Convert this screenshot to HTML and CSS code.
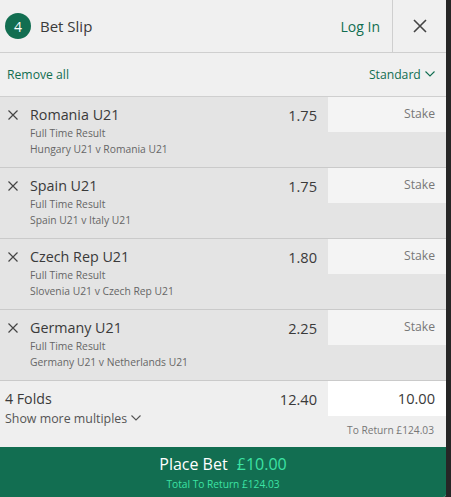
FILE: index.html
```html
<!DOCTYPE html>
<html lang="en">
<head>
    <meta charset="UTF-8">
    <title>Bet Slip</title>
    <link rel="stylesheet" href="styles.css">
</head>
<body>
	<div class="slip">
		<div class="top">
			<div class="badge">4</div>
			<div class="title">Bet Slip</div>
			<a class="login" href="#">Log In</a>
			<div class="close">
				<svg width="14" height="14" viewBox="0 0 14 14"><path d="M1 1L13 13M13 1L1 13" stroke="#444" stroke-width="1.6" fill="none"/></svg>
			</div>
		</div>
		<div class="tools">
			<a href="#">Remove all</a>
			<a href="#">Standard <svg class="chev" width="10" height="6" viewBox="0 0 10 6"><path d="M0.5 0.5L5 5L9.5 0.5" stroke="#126e51" stroke-width="1.1" fill="none"/></svg></a>
		</div>

		<div class="sel">
			<div class="pick">
				<svg class="x" width="10" height="10" viewBox="0 0 10 10"><path d="M0.5 0.5L9.5 9.5M9.5 0.5L0.5 9.5" stroke="#444" stroke-width="1.2" fill="none"/></svg>
				<div class="info">
					<div class="name">Romania U21</div>
					<div class="sub">Full Time Result</div>
					<div class="sub">Hungary U21 v Romania U21</div>
				</div>
				<div class="odds">1.75</div>
			</div>
			<div class="stake">Stake</div>
		</div>
		<div class="sel">
			<div class="pick">
				<svg class="x" width="10" height="10" viewBox="0 0 10 10"><path d="M0.5 0.5L9.5 9.5M9.5 0.5L0.5 9.5" stroke="#444" stroke-width="1.2" fill="none"/></svg>
				<div class="info">
					<div class="name">Spain U21</div>
					<div class="sub">Full Time Result</div>
					<div class="sub">Spain U21 v Italy U21</div>
				</div>
				<div class="odds">1.75</div>
			</div>
			<div class="stake">Stake</div>
		</div>
		<div class="sel">
			<div class="pick">
				<svg class="x" width="10" height="10" viewBox="0 0 10 10"><path d="M0.5 0.5L9.5 9.5M9.5 0.5L0.5 9.5" stroke="#444" stroke-width="1.2" fill="none"/></svg>
				<div class="info">
					<div class="name">Czech Rep U21</div>
					<div class="sub">Full Time Result</div>
					<div class="sub">Slovenia U21 v Czech Rep U21</div>
				</div>
				<div class="odds">1.80</div>
			</div>
			<div class="stake">Stake</div>
		</div>
		<div class="sel">
			<div class="pick">
				<svg class="x" width="10" height="10" viewBox="0 0 10 10"><path d="M0.5 0.5L9.5 9.5M9.5 0.5L0.5 9.5" stroke="#444" stroke-width="1.2" fill="none"/></svg>
				<div class="info">
					<div class="name">Germany U21</div>
					<div class="sub">Full Time Result</div>
					<div class="sub">Germany U21 v Netherlands U21</div>
				</div>
				<div class="odds">2.25</div>
			</div>
			<div class="stake">Stake</div>
		</div>

		<div class="folds">
			<div class="fold-left">
				<div class="fold-name">4 Folds</div>
				<div class="more">Show more multiples <svg class="chev" width="10" height="6" viewBox="0 0 10 6"><path d="M0.5 0.5L5 5L9.5 0.5" stroke="#555" stroke-width="1.1" fill="none"/></svg></div>
			</div>
			<div class="fold-odds">12.40</div>
			<div class="fold-right">
				<div class="amount">10.00</div>
				<div class="ret">To Return £124.03</div>
			</div>
		</div>

		<div class="place">
			<div class="place-main">Place Bet <span class="place-amt">£10.00</span></div>
			<div class="place-ret">Total To Return £124.03</div>
		</div>
	</div>
</body>
</html>
```

FILE: styles.css
```css
*{
	padding: 0px;
	margin: 0px;
	box-sizing: border-box;
}
body{
	background-color: #262626;
	font-family: "Open Sans", "Noto Sans", sans-serif;
	color: #3a3a3a;
	height: 497px;
	overflow: hidden;
}
a{
	text-decoration: none;
	color: #126e51;
}
.slip{
	width: 446px;
	height: 497px;
	background-color: #f0f0f0;
	display: flex;
	flex-direction: column;
	border-bottom-right-radius: 3px;
	overflow: hidden;
}
.top{
	height: 53px;
	display: flex;
	align-items: center;
	border-bottom: 1px solid #cfcfcf;
}
.badge{
	width: 26px;
	height: 26px;
	margin-left: 5px;
	border-radius: 50%;
	background-color: #126e51;
	color: #fff;
	font-size: 14px;
	display: flex;
	align-items: center;
	justify-content: center;
}
.title{
	margin-left: 9px;
	font-size: 15px;
	flex: 1;
}
.login{
	font-size: 14px;
	margin-right: 12px;
}
.close{
	width: 54px;
	height: 52px;
	border-left: 1px solid #cfcfcf;
	display: flex;
	align-items: center;
	justify-content: center;
}
.tools{
	height: 44px;
	display: flex;
	justify-content: space-between;
	align-items: center;
	padding: 0 11px 0 7px;
	border-bottom: 1px solid #cfcfcf;
	font-size: 12.2px;
}
.chev{
	margin-left: 1px;
	vertical-align: 2px;
}
.sel{
	height: 71px;
	display: flex;
	background-color: #e4e4e4;
	border-bottom: 1px solid #cacaca;
}
.pick{
	flex: 1;
	display: flex;
	padding: 8px 11px 0 8px;
}
.x{
	margin-top: 5px;
	margin-right: 12px;
}
.info{
	flex: 1;
}
.name{
	font-size: 14.3px;
	line-height: 20px;
}
.sub{
	font-size: 10.3px;
	line-height: 16px;
	color: #666;
}
.odds{
	font-size: 14.6px;
	line-height: 20px;
}
.stake{
	width: 118px;
	height: 35px;
	background-color: #f4f4f4;
	color: #777;
	font-size: 12.2px;
	text-align: right;
	padding: 8px 11px 0 0;
}
.folds{
	height: 66px;
	display: flex;
	background-color: #efefef;
}
.fold-left{
	flex: 1;
	padding: 8px 0 0 5px;
}
.fold-name{
	font-size: 14.2px;
	line-height: 20px;
}
.more{
	font-size: 12.4px;
	line-height: 20px;
	color: #555;
}
.fold-odds{
	font-size: 14.6px;
	line-height: 20px;
	padding: 8px 11px 0 0;
}
.fold-right{
	width: 118px;
}
.amount{
	height: 35px;
	background-color: #fff;
	font-size: 14.6px;
	text-align: right;
	padding: 7px 11px 0 0;
}
.ret{
	font-size: 10.2px;
	color: #777;
	text-align: right;
	padding: 7px 12px 0 0;
}
.place{
	flex: 1;
	background-color: #126e51;
	text-align: center;
	padding-top: 6px;
}
.place-main{
	color: #fff;
	font-size: 16px;
	line-height: 22px;
}
.place-amt{
	color: #3de3a4;
	margin-left: 5px;
}
.place-ret{
	color: #3de3a4;
	font-size: 10.2px;
	line-height: 18px;
}
```
